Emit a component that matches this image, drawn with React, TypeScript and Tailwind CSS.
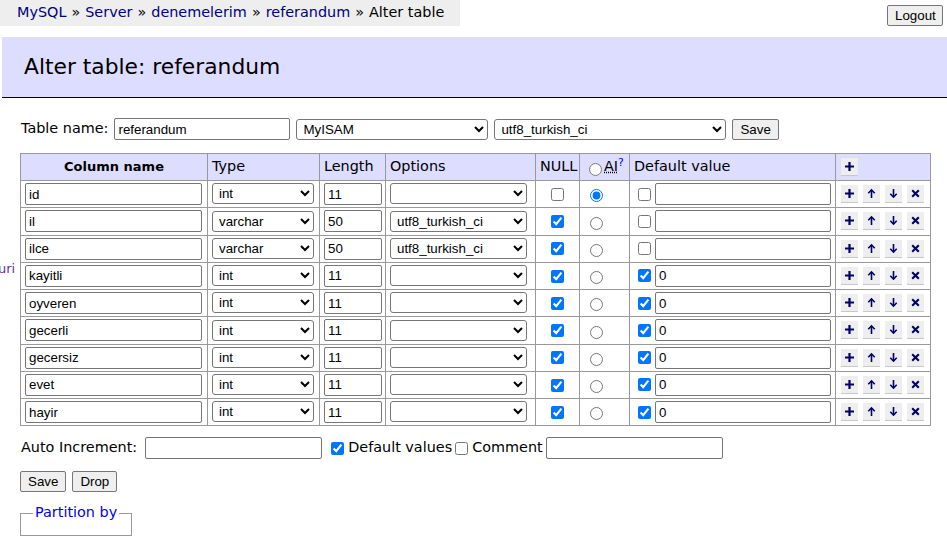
import React from "react";

type Field = {
  name: string;
  type: string;
  length: string;
  collation: string;
  nullable: boolean;
  ai: boolean;
  hasDefault: boolean;
  def: string;
};

const intField = (name: string): Field => ({
  name,
  type: "int",
  length: "11",
  collation: "",
  nullable: true,
  ai: false,
  hasDefault: true,
  def: "0",
});

const fields: Field[] = [
  { name: "id", type: "int", length: "11", collation: "", nullable: false, ai: true, hasDefault: false, def: "" },
  { name: "il", type: "varchar", length: "50", collation: "utf8_turkish_ci", nullable: true, ai: false, hasDefault: false, def: "" },
  { name: "ilce", type: "varchar", length: "50", collation: "utf8_turkish_ci", nullable: true, ai: false, hasDefault: false, def: "" },
  intField("kayitli"),
  intField("oyveren"),
  intField("gecerli"),
  intField("gecersiz"),
  intField("evet"),
  intField("hayir"),
];

const inputCls =
  "h-[22px] rounded-[2px] border border-[#767676] bg-white px-[3px] text-[13.33px] text-black [font-family:'Liberation_Sans',Arial,sans-serif] outline-none";
const selectCls =
  "h-[21px] rounded-[3px] border border-[#767676] bg-white pl-[2px] text-[13.33px] text-black [font-family:'Liberation_Sans',Arial,sans-serif] outline-none";
const btnCls =
  "h-[21px] rounded-[2px] border border-[#767676] bg-[#efefef] px-[7px] text-[13.33px] text-black [font-family:'Liberation_Sans',Arial,sans-serif]";
const cell = "border border-[#999] px-[4px] align-middle";

function IconBtn({ kind }: { kind: "plus" | "up" | "down" | "x" }) {
  return (
    <span className="inline-flex h-[18px] w-[17px] items-center justify-center border-b border-[#c8c8c8] bg-[#eeeeee]">
      <svg width="11" height="11" viewBox="0 0 11 11" fill="none" stroke="#000066">
        {kind === "plus" && <path d="M5.5 1v9M1 5.5h9" strokeWidth="2.2" />}
        {kind === "up" && (
          <>
            <path d="M5.5 2v8" strokeWidth="1.6" />
            <path d="M2.3 5.2L5.5 1.8l3.2 3.4" strokeWidth="1.6" />
          </>
        )}
        {kind === "down" && (
          <>
            <path d="M5.5 1v8" strokeWidth="1.6" />
            <path d="M2.3 5.8l3.2 3.4 3.2-3.4" strokeWidth="1.6" />
          </>
        )}
        {kind === "x" && <path d="M2.2 2.2l6.6 6.6M8.8 2.2l-6.6 6.6" strokeWidth="2.1" />}
      </svg>
    </span>
  );
}

function FieldRow({ f }: { f: Field }) {
  return (
    <tr className="h-[27.25px]">
      <td className={cell}>
        <input className={`${inputCls} w-[177px]`} defaultValue={f.name} />
      </td>
      <td className={cell}>
        <select className={`${selectCls} w-[102px]`} defaultValue={f.type}>
          <option value="int">int</option>
          <option value="varchar">varchar</option>
        </select>
      </td>
      <td className={cell}>
        <input className={`${inputCls} w-[58px]`} defaultValue={f.length} />
      </td>
      <td className={cell}>
        <select className={`${selectCls} w-[137px]`} defaultValue={f.collation}>
          <option value=""></option>
          <option value="utf8_turkish_ci">utf8_turkish_ci</option>
        </select>
      </td>
      <td className={`${cell} text-center`}>
        <input type="checkbox" className="m-0 align-middle" defaultChecked={f.nullable} />
      </td>
      <td className={`${cell} pl-[10px]`}>
        <input type="radio" name="auto" className="m-0 mt-[3px] align-middle" defaultChecked={f.ai} />
      </td>
      <td className={`${cell} whitespace-nowrap`}>
        <input type="checkbox" className="my-0 ml-[4px] mr-[4px] align-middle" defaultChecked={f.hasDefault} />
        <input className={`${inputCls} w-[176px] align-middle`} defaultValue={f.def} />
      </td>
      <td className={`${cell} pl-[5px]`}>
        <div className="flex gap-[5px]">
          <IconBtn kind="plus" />
          <IconBtn kind="up" />
          <IconBtn kind="down" />
          <IconBtn kind="x" />
        </div>
      </td>
    </tr>
  );
}

export default function App() {
  return (
    <div className="relative h-[541px] w-[947px] overflow-hidden bg-white text-[14.4px] text-black [font-family:'DejaVu_Sans',Verdana,sans-serif]">
      <div className="flex items-start justify-between">
        <div className="flex h-[26px] w-[460px] items-center bg-[#eeeeee] pl-[17px] text-[#000080]">
          MySQL <span className="mx-[5px] text-black">»</span> Server <span className="mx-[5px] text-black">»</span> denemelerim <span className="mx-[5px] text-black">»</span> referandum <span className="mx-[5px] text-black">»</span> <span className="text-black">Alter table</span>
        </div>
        <button className={`${btnCls} mt-[5px] mr-[4px] w-[56px]`}>Logout</button>
      </div>

      <h2 className="mt-[11px] ml-[2px] flex h-[61px] items-center border-b border-black bg-[#ddddff] pl-[22px] text-[21.8px] font-normal">
        Alter table: referandum
      </h2>

      <span className="absolute left-[-2px] top-[259px] text-[13px] text-[#663399]">uri</span>

      <div className="pl-[20px]">
        <div className="mt-[20px] flex items-center">
          <span className="ml-[1px] mr-[6px]">Table name:</span>
          <input className={`${inputCls} w-[176px]`} defaultValue="referandum" />
          <select className={`${selectCls} ml-[6px] w-[192px]`} defaultValue="MyISAM">
            <option>MyISAM</option>
          </select>
          <select className={`${selectCls} ml-[6px] w-[232px]`} defaultValue="utf8_turkish_ci">
            <option>utf8_turkish_ci</option>
          </select>
          <button className={`${btnCls} ml-[6px]`}>Save</button>
        </div>

        <table className="mt-[13px] w-[910px] table-fixed border-collapse border border-[#999]">
          <thead>
            <tr className="h-[27px] bg-[#ddddff] text-left">
              <th className={`${cell} w-[187px] text-center text-[13px] font-bold`}>Column name</th>
              <th className={`${cell} w-[112px] font-normal`}>Type</th>
              <th className={`${cell} w-[66px] font-normal`}>Length</th>
              <th className={`${cell} w-[150px] font-normal`}>Options</th>
              <th className={`${cell} w-[44px] font-normal`}>NULL</th>
              <th className={`${cell} w-[50px] whitespace-nowrap pl-[9px] font-normal`}>
                <input type="radio" name="auto" className="m-0 mt-[4px] mr-[2px] align-middle" />
                <abbr className="underline decoration-dotted">AI</abbr>
                <sup className="text-[#0000ee]">?</sup>
              </th>
              <th className={`${cell} w-[206px] font-normal`}>Default value</th>
              <th className={`${cell} w-[95px] pl-[5px] font-normal`}>
                <div className="flex">
                  <IconBtn kind="plus" />
                </div>
              </th>
            </tr>
          </thead>
          <tbody>
            {fields.map((f) => (
              <FieldRow key={f.name} f={f} />
            ))}
          </tbody>
        </table>

        <div className="mt-[11px] flex items-center">
          <span className="ml-[1px] mr-[8px]">Auto Increment:</span>
          <input className={`${inputCls} w-[177px]`} />
          <label className="ml-[9px] flex items-center">
            <input type="checkbox" className="m-0 mr-[4px]" defaultChecked />
            Default values
          </label>
          <label className="ml-[3px] flex items-center">
            <input type="checkbox" className="m-0 mr-[4px]" />
            Comment
          </label>
          <input className={`${inputCls} ml-[3px] w-[177px]`} />
        </div>

        <div className="mt-[12px] flex gap-[6px]">
          <button className={btnCls}>Save</button>
          <button className={btnCls}>Drop</button>
        </div>

        <fieldset className="mt-[10px] h-[34px] w-[112px] border border-[#999] pl-[12px] pr-0">
          <legend className="whitespace-nowrap px-[2px] text-[#0000ee]">Partition by</legend>
        </fieldset>
      </div>
    </div>
  );
}
